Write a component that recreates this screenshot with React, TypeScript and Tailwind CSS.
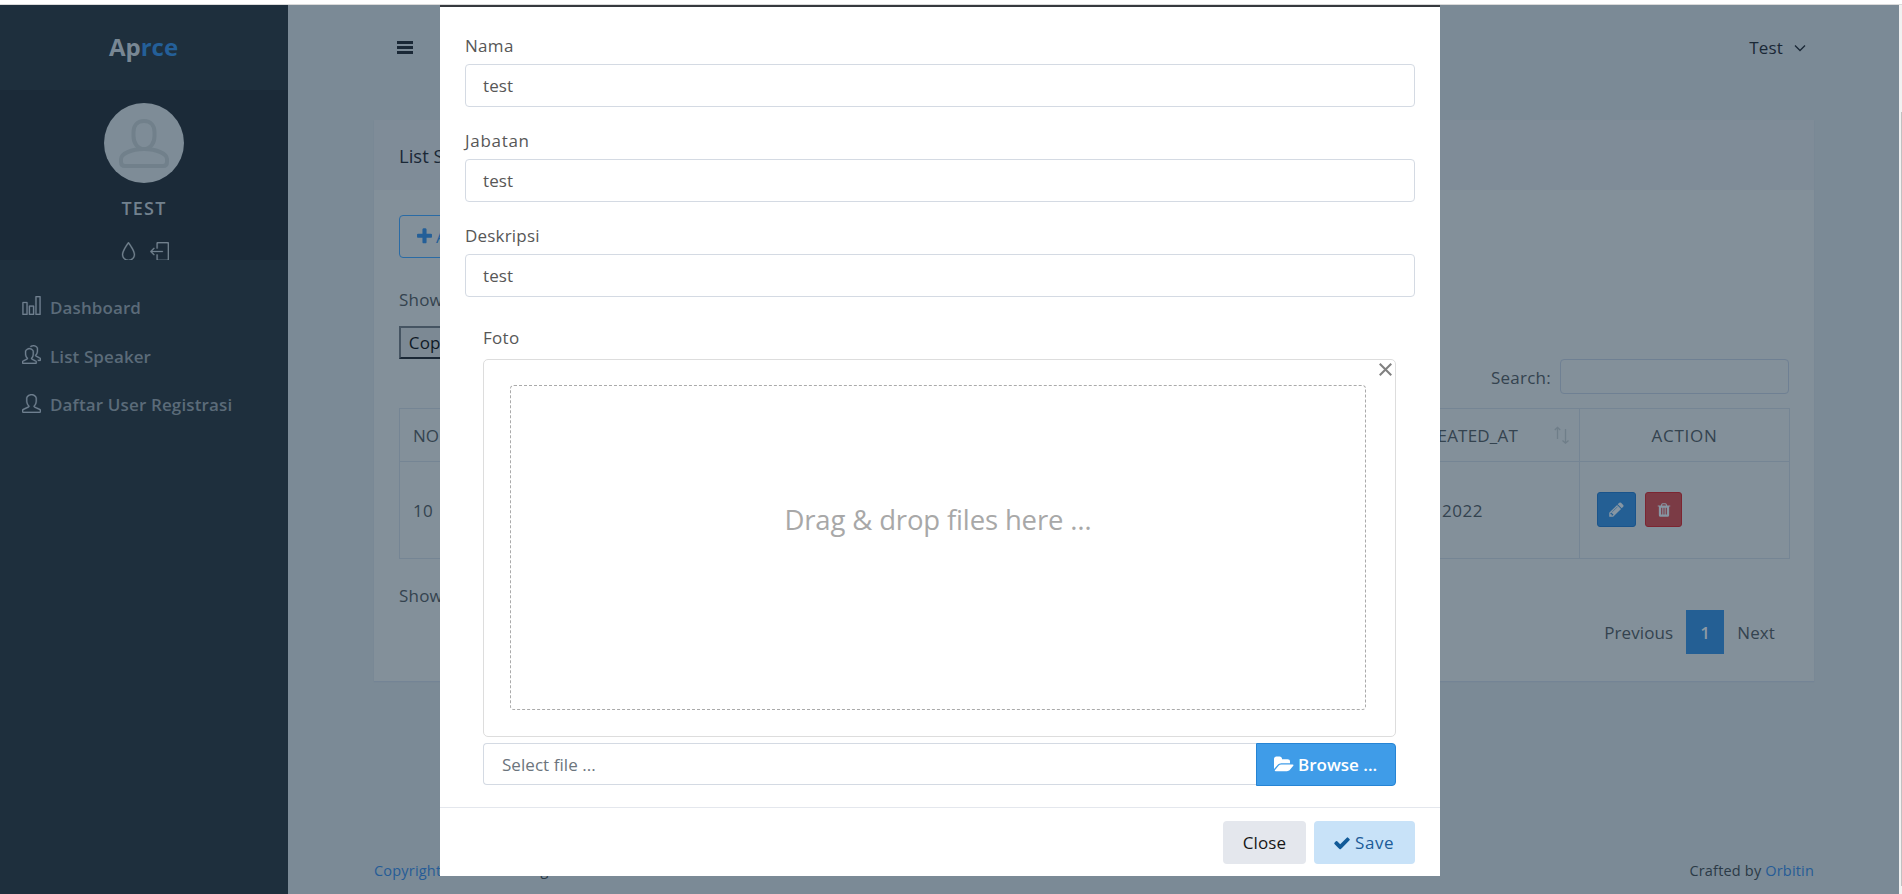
import React from "react";
import { SlDrop, SlLogout, SlChart, SlPeople, SlUser } from "react-icons/sl";

type GlyphProps = { d: string; className: string; viewBox?: string };

const Glyph = ({ d, className, viewBox = "0 0 1792 1792" }: GlyphProps) => (
  <svg viewBox={viewBox} className={className} fill="currentColor" aria-hidden="true">
    <path d={d} />
  </svg>
);

const CHECK =
  "M1671 566q0 40-28 68l-724 724-136 136q-28 28-68 28t-68-28l-136-136-362-362q-28-28-28-68t28-68l136-136q28-28 68-28t68 28l294 295 656-657q28-28 68-28t68 28l136 136q28 28 28 68z";
const PLUS =
  "M1600 736v192q0 40-28 68t-68 28h-416v416q0 40-28 68t-68 28h-192q-40 0-68-28t-28-68v-416h-416q-40 0-68-28t-28-68v-192q0-40 28-68t68-28h416v-416q0-40 28-68t68-28h192q40 0 68 28t28 68v416h416q40 0 68 28t28 68z";
const PENCIL =
  "M491 1536l91-91-235-235-91 91v107h128v128h107zm523-928q0-22-22-22-10 0-17 7l-542 542q-7 7-7 17 0 22 22 22 10 0 17-7l542-542q7-7 7-17zm-54-192l416 416-832 832h-416v-416zm683 96q0 53-37 90l-166 166-416-416 166-165q36-38 90-38 53 0 91 38l235 234q37 39 37 91z";
const TRASH =
  "M704 1376v-704q0-14-9-23t-23-9h-64q-14 0-23 9t-9 23v704q0 14 9 23t23 9h64q14 0 23-9t9-23zm256 0v-704q0-14-9-23t-23-9h-64q-14 0-23 9t-9 23v704q0 14 9 23t23 9h64q14 0 23-9t9-23zm256 0v-704q0-14-9-23t-23-9h-64q-14 0-23 9t-9 23v704q0 14 9 23t23 9h64q14 0 23-9t9-23zm-544-992h448l-48-117q-7-9-17-11h-317q-10 2-17 11zm928 32v64q0 14-9 23t-23 9h-96v948q0 83-47 143.5t-113 60.5h-832q-66 0-113-58.5t-47-141.5v-952h-96q-14 0-23-9t-9-23v-64q0-14 9-23t23-9h309l70-167q15-37 54-63t79-26h320q40 0 79 26t54 63l70 167h309q14 0 23 9t9 23z";
const FOLDER =
  "M1879 952q0 31-31 66l-336 396q-43 51-120.5 86.5t-143.5 35.5h-1088q-34 0-60.5-13t-26.5-43q0-31 31-66l336-396q43-51 120.5-86.5t143.5-35.5h1088q34 0 60.5 13t26.5 43zm-343-344v160h-832q-94 0-197 47.5t-164 119.5l-337 396-5 6q0-4-.5-12.5t-.5-12.5v-960q0-92 66-158t158-66h320q92 0 158 66t66 158v32h544q92 0 158 66t66 158z";

function Sidebar() {
  return (
    <aside className="flex w-[288px] shrink-0 flex-col bg-[#1e2f3d]">
      <div className="flex h-[85px] items-center justify-center pr-px pb-px text-[24px] font-bold text-[#788794]">
        <span>
          Ap<span className="text-[#245f98]">rce</span>
        </span>
      </div>
      <div className="flex h-[170px] flex-col items-center overflow-hidden bg-[#1b2a38] pt-[13px]">
        <div className="flex size-20 shrink-0 items-center justify-center rounded-full bg-[#7e8c97]">
          <svg viewBox="0 0 50 49" className="h-[49px] w-[50px]" fill="none" stroke="#71808b" strokeWidth="4">
            <path d="M25 2c-7 0-10.500 5-10.500 11v4c0 7 4 13 10.500 13s10.500-6 10.500-13v-4c0-6-3.500-11-10.500-11z" />
            <path d="M25 30c-13 0-23 5-23 10v3q0 4 4 4h38q4 0 4-4v-3c0-5-10-10-23-10z" />
          </svg>
        </div>
        <div className="mt-[13px] h-6 text-[18px] leading-6 font-semibold tracking-[1.2px] text-[#72818e]">TEST</div>
        <div className="mt-[22px] flex w-[50px] shrink-0 justify-between text-[#72818e]">
          <SlDrop className="size-[19px] stroke-current stroke-[14px]" />
          <SlLogout className="size-[19px] stroke-current stroke-[14px]" />
        </div>
      </div>
      <nav className="flex flex-col pt-[24px] pl-[22px] text-[17px] font-semibold text-[#5b6b79]">
        <div className="flex h-[49px] items-center gap-[9px]">
          <SlChart className="mb-[6px] size-[19px] stroke-current stroke-[14px] text-[#708090]" />
          <span className="-mt-[2px] tracking-[0.1px]">Dashboard</span>
        </div>
        <div className="flex h-[49px] items-center gap-[9px]">
          <SlPeople className="mb-[6px] size-[19px] stroke-current stroke-[14px] text-[#708090]" />
          <span className="-mt-[2px] tracking-[0.1px]">List Speaker</span>
        </div>
        <div className="flex h-[49px] items-center gap-[9px]">
          <SlUser className="mb-[6px] size-[19px] stroke-current stroke-[14px] text-[#708090]" />
          <span className="-mt-[4px] tracking-[0.14px]">Daftar User Registrasi</span>
        </div>
      </nav>
    </aside>
  );
}

function Main() {
  return (
    <main className="flex w-[1611px] shrink-0 flex-col bg-[#7b8a96] pr-[85px] pl-[86px]">
      <header className="flex h-[115px] items-start justify-between pt-[31px] pr-2 pl-[23px] text-[#1a2836]">
        <svg viewBox="0 0 16 13" className="mt-[5px] h-[13px] w-4" fill="currentColor">
          <path d="M0 0h16v3H0zM0 5h16v3H0zM0 10h16v3H0z" />
        </svg>
        <div className="flex items-center gap-[11px] text-[17px] leading-6 tracking-[0.2px]">
          Test
          <svg viewBox="0 0 12 8" className="h-2 w-3" fill="none" stroke="currentColor" strokeWidth="1.300">
            <path d="M1 1.500l5 5 5-5" />
          </svg>
        </div>
      </header>
      <section className="flex h-[561px] shrink-0 flex-col bg-[#83909a] shadow-[0_1px_1px_#748495]">
        <h3 className="h-[70px] shrink-0 bg-[#7f8c98] pl-[25px] text-[18.5px] leading-[71px] font-normal text-[#1a2836]">List Speaker</h3>
        <div className="flex flex-col pt-[25px] pr-[24px] pl-[25px] text-[17px] text-[#34434f]">
          <button className="flex h-[43px] w-[160px] items-center gap-[2px] rounded border border-[#2a6ba5] pl-[15px] text-[#245f98]">
            <Glyph d={PLUS} className="size-[19px]" />
            Add Speaker
          </button>
          <div className="mt-[30px] h-6 leading-6 tracking-[0.2px]">Show 10 entries</div>
          <button className="mt-[14px] flex h-[33px] w-[60px] items-center justify-center border-2 border-t-[#455462] border-r-[#1a2836] border-b-[#1a2836] border-l-[#455462] bg-[#7c8994] tracking-[0.1px] text-[#101a26]">
            Copy
          </button>
          <label className="flex h-[35px] items-center gap-[9px] self-end pr-px tracking-[0.25px]">
            <span className="pt-[2px]">Search:</span>
            <span className="h-[35px] w-[229px] rounded border border-[#6f8093]" />
          </label>
          <div className="mt-[14px] flex h-[151px] w-[1391px] border border-[#758594]">
            <div className="flex grow flex-col">
              <div className="flex h-[53px] items-center border-b border-[#758594] pt-px pl-[13px]">NO</div>
              <div className="flex grow items-center pt-px pl-[13px] tracking-[0.3px]">10</div>
            </div>
            <div className="flex w-[200px] flex-col">
              <div className="flex h-[53px] items-center justify-end border-b border-[#758594] pr-[9px]">
                <span className="pt-px pr-[36px] tracking-[0.2px]">CREATED_AT</span>
                <svg viewBox="0 0 16 19" className="h-[19px] w-4" fill="none" stroke="#6f7e89" strokeWidth="1.300">
                  <path d="M3.500 13V1.500M.8 4L3.500 1.300 6.200 4" />
                  <path d="M11.500 3v14M8.500 14.500l3 2.700 3-2.700" />
                </svg>
              </div>
              <div className="flex grow items-center justify-end pt-px pr-[96px] tracking-[0.5px]">Sep 2022</div>
            </div>
            <div className="flex w-[210px] flex-col border-l border-[#758594]">
              <div className="flex h-[53px] items-center justify-center border-b border-[#758594] pt-px tracking-[0.7px]">ACTION</div>
              <div className="flex grow items-center gap-[9px] pb-px pl-[17px] text-[#8796a3]">
                <span className="flex h-[35px] w-[39px] items-center justify-center rounded-[3px] border border-[#1a548b] bg-[#245f94]">
                  <Glyph d={PENCIL} className="size-[17px]" />
                </span>
                <span className="flex h-[35px] w-[37px] items-center justify-center rounded-[3px] border border-[#7c2531] bg-[#7b3b45]">
                  <Glyph d={TRASH} className="size-[16px]" />
                </span>
              </div>
            </div>
          </div>
          <div className="mt-[25px] h-6 leading-6 tracking-[0.2px]">Showing 1 to 1 of 1 entries</div>
          <div className="mt-[2px] flex h-[44px] items-center self-end pr-[15px] tracking-[0.1px]">
            <span className="pt-px pr-[13px]">Previous</span>
            <span className="flex h-[44px] w-[38px] items-center justify-center bg-[#245f94] pt-px font-semibold text-[#8b99a5]">1</span>
            <span className="pt-px pl-[13px]">Next</span>
          </div>
        </div>
      </section>
      <footer className="mt-[179px] flex justify-between text-[14.5px] leading-[22px] text-[#2b3a47]">
        <span className="flex">
          <span className="w-[119px] tracking-[0.2px] text-[#265c96]">Copyright</span>
          <span className="-mt-px">Orbiting</span>
        </span>
        <span className="tracking-[0.18px]">
          Crafted by <span className="text-[#265c96]">Orbitin</span>
        </span>
      </footer>
    </main>
  );
}

type FieldProps = { label: string; tracking: string };

function Field({ label, tracking }: FieldProps) {
  return (
    <div className="flex h-[95px] flex-col">
      <span className={`h-[31px] leading-[25px] ${tracking}`}>{label}</span>
      <div className="flex h-[43px] items-center rounded border border-[#d4dae3] pt-px pl-[17px] tracking-[0.1px]">test</div>
    </div>
  );
}

function Modal() {
  return (
    <div className="absolute top-[5px] left-[440px] flex h-[871px] w-[1000px] flex-col border-t-2 border-[#36393e] bg-white text-[17px] text-[#575757]">
      <div className="flex h-[801px] flex-col border-b border-[#e4e7ed] px-[25px] pt-[26px]">
        <Field label="Nama" tracking="tracking-[0.3px]" />
        <Field label="Jabatan" tracking="tracking-[0.7px]" />
        <Field label="Deskripsi" tracking="tracking-[0.2px]" />
        <div className="flex flex-col pt-[7px] pr-[19px] pl-[18px]">
          <span className="h-[34px] leading-[25px] tracking-[0.3px]">Foto</span>
          <div className="flex h-[378px] flex-col rounded-[5px] border border-[#dddddd] pt-[3px]">
            <svg viewBox="0 0 12 12" className="mr-[3px] size-[13px] self-end" fill="none" stroke="#808080" strokeWidth="1.900">
              <path d="M.7 .7l10.600 10.600M11.300 .7L.7 11.300" />
            </svg>
            <div className="mt-[9px] mr-[29px] ml-[26px] flex h-[325px] items-center justify-center rounded border border-dashed border-[#aaaaaa] pb-[55px] text-[27.5px] tracking-[-0.15px] text-[#a8a8a8]">
              Drag &amp; drop files here …
            </div>
          </div>
          <div className="mt-[6px] flex h-[43px]">
            <div className="flex h-[42px] grow items-center rounded-l border border-r-0 border-[#d4dae3] pt-px pl-[18px] tracking-[0.05px] text-[#6c757d]">Select file ...</div>
            <div className="flex w-[140px] items-center rounded-r border border-[#2684d4] bg-[#3f9ce8] pl-[17px] font-semibold text-white">
              <Glyph d={FOLDER} viewBox="0 0 1920 1792" className="mr-[4px] h-[19px] w-[20px]" />
              Browse ...
            </div>
          </div>
        </div>
      </div>
      <div className="flex items-start justify-end gap-[8px] pt-[13px] pr-[25px]">
        <button className="h-[43px] w-[83px] rounded bg-[#e4e7ed] pt-px tracking-[0.15px] text-[#171717]">Close</button>
        <button className="flex h-[43px] w-[101px] items-center rounded bg-[#c8e2f8] pt-px pl-[19px] tracking-[0.6px] text-[#1c5c98]">
          <Glyph d={CHECK} className="mr-[4px] size-[18px] text-[#115a98]" />
          Save
        </button>
      </div>
    </div>
  );
}

export default function App() {
  return (
    <div className="relative flex h-[894px] w-[1902px] flex-col overflow-hidden bg-white font-['Open_Sans',sans-serif]">
      <div className="h-[5px] shrink-0 border-b border-[#dadada]" />
      <div className="flex h-[889px]">
        <Sidebar />
        <Main />
        <div className="flex w-[3px] justify-end bg-[#f1f1f1]">
          <div className="mt-[107px] h-[774px] w-px bg-[#c1c1c1]" />
        </div>
      </div>
      <Modal />
    </div>
  );
}
